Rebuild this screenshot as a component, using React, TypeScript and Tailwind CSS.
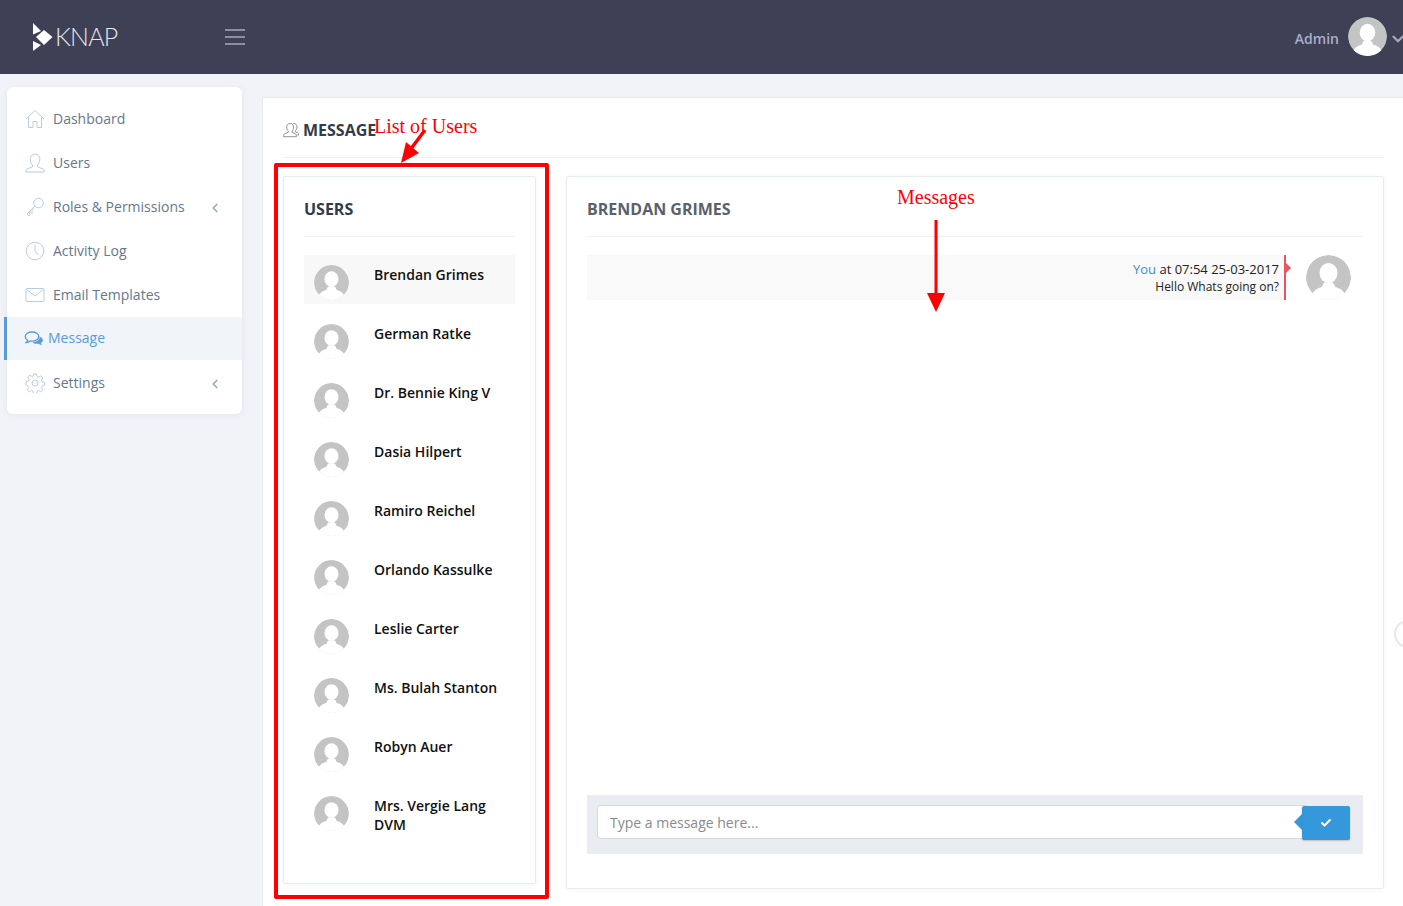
import React from 'react';
import { ChevronDown, ChevronLeft, Check } from 'lucide-react';

const users = [
    'Brendan Grimes',
    'German Ratke',
    'Dr. Bennie King V',
    'Dasia Hilpert',
    'Ramiro Reichel',
    'Orlando Kassulke',
    'Leslie Carter',
    'Ms. Bulah Stanton',
    'Robyn Auer',
    'Mrs. Vergie Lang DVM',
];

const Avatar: React.FC<{ className: string }> = ({ className }) => (
    <svg viewBox="0 0 40 40" className={`${className} shrink-0 rounded-full`}>
        <circle cx="20" cy="20" r="20" fill="#c4c4c4" />
        <ellipse cx="20" cy="16" rx="8" ry="9" fill="#fff" />
        <path d="M4 40c1-7 4-10 10-11.500l2-4h8l2 4c6 1.500 9 4.500 10 11.500z" fill="#fff" />
    </svg>
);

const iconClass = 'w-[20px] h-[20px] shrink-0';

const HomeIcon = () => (
    <svg viewBox="0 0 20 20" fill="none" stroke="#b9cde0" strokeWidth="1" className={iconClass}>
        <path d="M1 10 10 1.500 19 10M3.500 8.500V18.500H8V12.500H12V18.500H16.500V8.500" />
    </svg>
);

const UserIcon = () => (
    <svg viewBox="0 0 20 20" fill="none" stroke="#b9cde0" strokeWidth="1" className={iconClass}>
        <path d="M10 1c-3 0-4.800 2.200-4.800 5.200 0 2.500 1 4.500 2.300 5.800v1.800L2 16c-1 .5-1.200 1.500-1.200 3h18.400c0-1.500-.2-2.500-1.200-3l-5.500-2.200V12c1.300-1.300 2.300-3.300 2.300-5.800C14.800 3.200 13 1 10 1z" />
    </svg>
);

const KeyIcon = () => (
    <svg viewBox="0 0 20 20" fill="none" stroke="#b9cde0" strokeWidth="1" className={iconClass}>
        <circle cx="13.500" cy="6" r="4.800" />
        <path d="M9.800 9.200 2 17l2 2 1.500-1.500L4 16l1.500-1 1.500 1.500 1-1-1.500-1.500 2.500-2.500" />
    </svg>
);

const ClockIcon = () => (
    <svg viewBox="0 0 20 20" fill="none" stroke="#b9cde0" strokeWidth="1" className={iconClass}>
        <circle cx="10" cy="10" r="8.800" />
        <path d="M10 4v6.500l3.500 3" />
    </svg>
);

const MailIcon = () => (
    <svg viewBox="0 0 20 20" fill="none" stroke="#b9cde0" strokeWidth="1" className={iconClass}>
        <rect x="1" y="3.500" width="18" height="13" rx="1" />
        <path d="M1.500 4.500 10 11l8.500-6.500" />
    </svg>
);

const MessageIcon = () => (
    <svg viewBox="0 0 20 20" className="w-[20px] h-[20px] shrink-0">
        <path d="M8 3c-3.800 0-6.800 2-6.800 4.600 0 1.500 1 2.800 2.500 3.600-.3 1-.8 1.800-1.400 2.300 1.500-.1 3-.8 3.900-1.500.6.100 1.200.2 1.800.2 3.800 0 6.800-2 6.800-4.600S11.800 3 8 3z" fill="none" stroke="#5a9bdc" strokeWidth="1.300" />
        <path d="M15.500 7.500c2 .7 3.400 2 3.400 3.500 0 1.200-.8 2.300-2 3 .2.800.6 1.500 1.100 2-1.300 0-2.500-.7-3.300-1.300-2.400.3-5-.3-6.200-1.500 4 .2 7.500-2 7-5.700z" fill="#5a9bdc" />
    </svg>
);

const GearIcon = () => (
    <svg viewBox="0 0 20 20" fill="none" stroke="#b9cde0" strokeWidth="1" className={iconClass}>
        <circle cx="10" cy="10" r="3" />
        <path d="M8.500 1h3l.5 2.600 1.500.7 2.300-1.400 2 2.100-1.400 2.200.7 1.600 2.400.6v3l-2.400.6-.7 1.600 1.400 2.200-2 2.100-2.300-1.400-1.500.7-.5 2.600h-3l-.5-2.600-1.500-.7-2.300 1.400-2-2.100 1.400-2.200-.7-1.600L1 11.600v-3l2.400-.6.700-1.600L2.700 4.200l2-2.100L7 3.500l1.500-.7z" />
    </svg>
);

const navItems = [
    { label: 'Dashboard', icon: <HomeIcon /> },
    { label: 'Users', icon: <UserIcon /> },
    { label: 'Roles & Permissions', icon: <KeyIcon />, arrow: true },
    { label: 'Activity Log', icon: <ClockIcon /> },
    { label: 'Email Templates', icon: <MailIcon /> },
    { label: 'Message', icon: <MessageIcon />, active: true },
    { label: 'Settings', icon: <GearIcon />, arrow: true },
];

export default function App() {
    return (
        <div className="relative h-[906px] overflow-hidden bg-[#f1f3f8] font-['Open_Sans',sans-serif]">
            {/* Header */}
            <header className="h-[74px] bg-[#3e4055] flex items-center">
                <div className="w-[225px] pl-[33px] flex items-center">
                    <svg viewBox="0 0 20 28" className="w-[20px] h-[28px]">
                        <path d="M0 0 8 8 0 11.500z" fill="#fff" />
                        <path d="M3 14 11 7 19.500 14 11 22z" fill="#fff" />
                        <path d="M0 18 8 22 0 28z" fill="#fff" />
                    </svg>
                    <span className="ml-[2px] -mt-[2px] font-['Lato',sans-serif] font-light text-[25px] tracking-[-0.8px] leading-none text-[#e4e5ea]">KNAP</span>
                </div>
                <div className="flex flex-col gap-[5px] w-[20px]">
                    <span className="h-[2px] bg-[#8d8f9f]" />
                    <span className="h-[2px] bg-[#8d8f9f]" />
                    <span className="h-[2px] bg-[#8d8f9f]" />
                </div>
                <div className="ml-auto flex items-center -mr-[4px]">
                    <span className="text-[14px] font-semibold text-[#a9afc9] mt-[3px]">Admin</span>
                    <Avatar className="w-[39px] h-[39px] ml-[9px] -mt-px" />
                    <ChevronDown className="w-[18px] h-[18px] text-[#a3a9c4] ml-[2px] mt-[3px]" strokeWidth={3} />
                </div>
            </header>

            <div className="flex items-start">
                {/* Sidebar */}
                <aside className="w-[235px] ml-[7px] mt-[13px] pt-[10px] pb-[9px] bg-white rounded-md shadow-[0_1px_6px_rgba(120,140,170,0.12)]">
                    {navItems.map(item => (
                        <div
                            key={item.label}
                            className={
                                item.active
                                    ? 'h-[43px] mb-px -ml-[3px] pl-[17px] pr-[20px] flex items-center bg-[#f1f4f9] border-l-[3px] border-[#5a9bdc] text-[#5a9bdc]'
                                    : 'h-[44px] pl-[18px] pr-[22px] flex items-center text-[#64788f]'
                            }
                        >
                            {item.icon}
                            <span className={item.active ? 'ml-[4px] -mt-[2px] text-[14px]' : 'ml-[8px] -mt-[2px] text-[14px]'}>{item.label}</span>
                            {item.arrow && <ChevronLeft className="ml-auto mr-[-2px] mt-[1px] w-[14px] h-[14px] text-[#93a9c4]" strokeWidth={3} />}
                        </div>
                    ))}
                </aside>

                {/* Main panel */}
                <main className="flex-1 ml-[20px] mt-[23px] h-[809px] bg-white border-l border-t border-[#e6eaf0] pl-[20px] pr-[19px]">
                    <div className="h-[60px] border-b border-[#eef0f4] flex items-center pt-[5px]">
                        <svg viewBox="0 0 16 16" fill="none" stroke="#777" strokeWidth="0.8" className="w-[16px] h-[16px] mr-[4px]">
                            <path d="M7 1.500c-2 0-3.300 1.500-3.300 3.600 0 1.600.7 3 1.600 3.900v1.200l-3.500 1.500c-.8.3-1.200 1-1.200 3h12.800c0-2-.4-2.700-1.200-3L9 10.200V9c.9-.9 1.600-2.300 1.600-3.900C10.600 3 9 1.500 7 1.500z" />
                            <path d="M10 1.500c2.200-.5 4 1 4 3.500 0 1.500-.6 2.800-1.500 3.700v1.100l2.200 1c.8.400 1.100 1.200 1.100 2.200h-1.500" />
                        </svg>
                        <h1 className="text-[16px] font-bold text-[#333b48]">MESSAGE</h1>
                    </div>

                    <div className="flex items-start gap-[30px] mt-[18px]">
                        {/* Users */}
                        <section className="w-[253px] h-[708px] shrink-0 border border-[#e8ecf1] rounded-[2px] shadow-[0_1px_5px_rgba(120,140,170,0.08)] px-[20px]">
                            <div className="h-[60px] border-b border-[#eef0f4] flex items-center pt-[5px]">
                                <h2 className="text-[16px] font-bold text-[#333b48]">USERS</h2>
                            </div>
                            <ul className="mt-[18px] flex flex-col gap-[10px]">
                                {users.map((name, i) => (
                                    <li key={name} className={i === 0 ? 'bg-[#f8f8f8] min-h-[49px] pt-[10px] px-[10px] flex' : 'min-h-[49px] pt-[10px] px-[10px] flex'}>
                                        <Avatar className="w-[35px] h-[35px]" />
                                        <span className="ml-[25px] text-[14px] leading-[19px] font-semibold text-[#111]">{name}</span>
                                    </li>
                                ))}
                            </ul>
                        </section>

                        {/* Chat */}
                        <section className="flex-1 h-[713px] border border-[#e8ecf1] rounded-[2px] shadow-[0_1px_5px_rgba(120,140,170,0.08)] px-[20px] pb-[34px] flex flex-col">
                            <div className="h-[60px] border-b border-[#eef0f4] flex items-center pt-[5px]">
                                <h2 className="text-[16px] font-bold text-[#59616d]">BRENDAN GRIMES</h2>
                            </div>
                            <div className="mt-[18px] flex items-start">
                                <div className="relative flex-1 h-[45px] bg-[#f9f9f9] border-r-2 border-[#f0505f] pr-[5px] pt-[5px] text-right leading-[18px] text-[#222]">
                                    <div className="text-[13px]"><span className="text-[#3f8fc9]">You</span> at 07:54 25-03-2017</div>
                                    <div className="text-[12px]">Hello Whats going on?</div>
                                    <span className="absolute left-full top-[6px] border-y-[7px] border-l-[7px] border-y-transparent border-l-[#f0505f]" />
                                </div>
                                <Avatar className="w-[45px] h-[45px] ml-[20px] mr-[12px]" />
                            </div>
                            <div className="mt-auto h-[59px] bg-[#e9edf2] pl-[10px] pr-[13px] pt-[10px]">
                                <div className="relative h-[34px]">
                                    <div className="mr-[40px] h-[34px] bg-white border border-[#d8d8d8] rounded-[4px] pl-[12px] flex items-center text-[14px] text-[#8a8a8a]">
                                        Type a message here...
                                    </div>
                                    <span className="absolute right-[48px] top-[9px] border-y-[8px] border-r-[8px] border-y-transparent border-r-[#3498db]" />
                                    <button className="absolute right-0 top-[1px] w-[48px] h-[34px] bg-[#3498db] rounded-[2px] shadow-[0_1px_2px_rgba(0,0,0,0.2)] flex items-center justify-center">
                                        <Check className="w-[12px] h-[12px] text-white" strokeWidth={4} />
                                    </button>
                                </div>
                            </div>
                        </section>
                    </div>
                </main>
            </div>

            {/* Round edge handle */}
            <div className="absolute left-[1394px] top-[620px] w-[28px] h-[28px] rounded-full border-2 border-[#e3e7ee] bg-white" />

            {/* Annotations over the screenshot */}
            <div className="absolute left-[274px] top-[163px] w-[275px] h-[736px] border-4 border-[#ff0000] rounded-[2px]" />
            <span className="absolute left-[374px] top-[115px] font-['Liberation_Serif',serif] text-[20px] leading-[23px] text-[#ff0000]">List of Users</span>
            <span className="absolute left-[897px] top-[186px] font-['Liberation_Serif',serif] text-[20px] leading-[23px] text-[#ff0000]">Messages</span>
            <svg className="absolute left-[395px] top-[125px] w-[35px] h-[40px]" viewBox="0 0 35 40">
                <path d="M30 5 15 25" stroke="#ff0000" strokeWidth="3.500" fill="none" />
                <path d="M6 38 11 17 24 28z" fill="#ff0000" />
            </svg>
            <svg className="absolute left-[925px] top-[219px] w-[22px] h-[94px]" viewBox="0 0 22 94">
                <path d="M11 1V76" stroke="#ff0000" strokeWidth="3" fill="none" />
                <path d="M2 74H20L11 93z" fill="#ff0000" />
            </svg>
        </div>
    );
}
